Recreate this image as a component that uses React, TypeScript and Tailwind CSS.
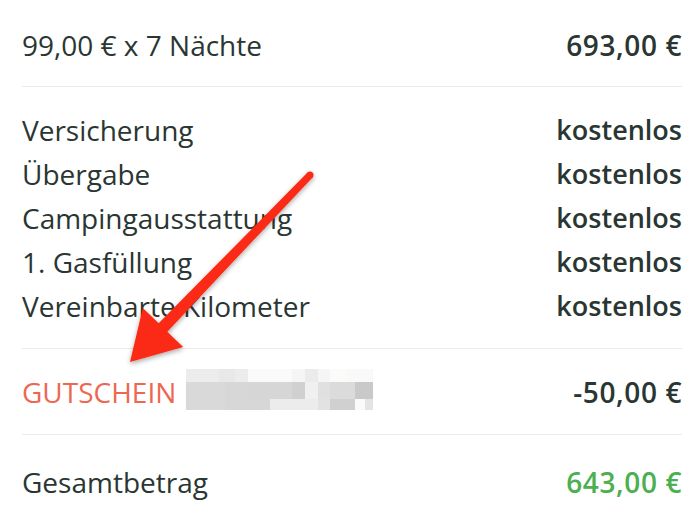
import React from "react";

const cells: [number, number, number, number, string][] = [
  [186, 369, 33, 13, "#ececec"],
  [219, 369, 16, 13, "#e8e8e8"],
  [235, 369, 13, 13, "#ececec"],
  [248, 369, 44, 13, "#fafafa"],
  [292, 369, 13, 13, "#f5f5f5"],
  [305, 369, 13, 13, "#ebebeb"],
  [318, 369, 12, 13, "#f5f5f5"],
  [330, 369, 15, 13, "#fbfbf9"],
  [345, 369, 28, 13, "#f9f9f9"],
  [186, 382, 39, 17, "#d8d9d8"],
  [225, 382, 23, 17, "#d6d7d6"],
  [248, 382, 44, 17, "#d5d6d5"],
  [292, 382, 13, 17, "#cfd0cf"],
  [305, 382, 13, 17, "#f0f0f0"],
  [318, 382, 12, 17, "#dfe0df"],
  [330, 382, 25, 17, "#dadbda"],
  [355, 382, 18, 17, "#c8c9c8"],
  [186, 399, 39, 11, "#d8d9d8"],
  [225, 399, 23, 11, "#d6d7d6"],
  [248, 399, 22, 11, "#d6d7d6"],
  [270, 399, 48, 11, "#ececec"],
  [318, 399, 12, 11, "#e2e2e2"],
  [330, 399, 25, 11, "#cfd0cf"],
  [355, 399, 10, 11, "#fafafa"],
  [365, 399, 8, 11, "#e4e4e4"],
];

function Row({ label, value }: { label: string; value: string }) {
  return (
    <div className="flex h-[44px] items-center justify-between">
      <span>{label}</span>
      <span className="text-[27px] font-semibold">{value}</span>
    </div>
  );
}

export default function App() {
  return (
    <div
      className="relative h-[510px] w-[700px] overflow-hidden bg-white text-[28px] leading-[44px] text-[#2a3632]"
      style={{ fontFamily: '"Open Sans", "Noto Sans", sans-serif' }}
    >
      <div className="pl-[22px] pr-[18px] pt-[23px]">
        <div className="flex h-[44px] items-center justify-between">
          <span>99,00 € x 7 Nächte</span>
          <span className="font-semibold tracking-[0.6px]">693,00 €</span>
        </div>
        <div className="mb-[21px] mt-[19px] h-px bg-[#f0ebe2]" />
        <Row label="Versicherung" value="kostenlos" />
        <Row label="Übergabe" value="kostenlos" />
        <Row label="Campingausstattung" value="kostenlos" />
        <Row label="1. Gasfüllung" value="kostenlos" />
        <Row label="Vereinbarte Kilometer" value="kostenlos" />
        <div className="mb-[21px] mt-[20px] h-px bg-[#f0ebe2]" />
        <div className="flex h-[44px] items-center justify-between">
          <span className="text-[#ec6852]">GUTSCHEIN</span>
          <span className="font-semibold tracking-[0.6px]">-50,00 €</span>
        </div>
        <div className="mb-[25px] mt-[20px] h-px bg-[#f0ebe2]" />
        <div className="flex h-[44px] items-center justify-between">
          <span>Gesamtbetrag</span>
          <span className="font-semibold tracking-[0.6px] text-[#4caf50]">643,00 €</span>
        </div>
      </div>

      <svg className="pointer-events-none absolute left-0 top-0" width="700" height="510" viewBox="0 0 700 510">
        <defs>
          <filter id="sh" x="-20%" y="-20%" width="140%" height="140%">
            <feDropShadow dx="0" dy="2" stdDeviation="2.5" floodColor="#000" floodOpacity="0.35" />
          </filter>
        </defs>
        {cells.map(([x, y, w, h, c], i) => (
          <rect key={i} x={x} y={y} width={w} height={h} fill={c} />
        ))}
        <g filter="url(#sh)" fill="#fa2a12">
          <polygon points="307.5,172.6 158.7,323.3 142.8,308.1 130,362 183.2,346.9 167.3,331.7 312.5,177.4" />
          <circle cx="310" cy="175" r="3.5" />
        </g>
      </svg>
    </div>
  );
}
